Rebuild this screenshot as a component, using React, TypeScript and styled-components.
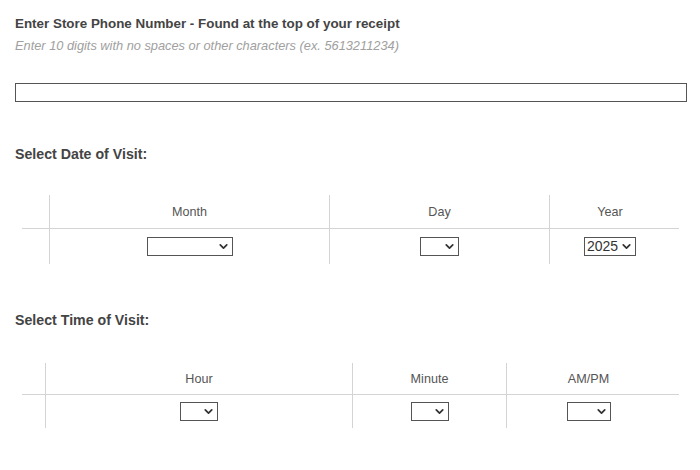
import React from "react";
import styled, { createGlobalStyle } from "styled-components";
import { ChevronDown } from "lucide-react";

const GlobalStyle = createGlobalStyle`
  body {
    margin: 0;
    background: #fff;
    font-family: "Liberation Sans", Arial, sans-serif;
  }
`;

type Column = { label: string; width: number; select?: number; value?: string };

const dateColumns: Column[] = [
  { label: "", width: 27 },
  { label: "Month", width: 280, select: 86 },
  { label: "Day", width: 220, select: 39 },
  { label: "Year", width: 121, select: 52, value: "2025" },
  { label: "", width: 9 },
];

const timeColumns: Column[] = [
  { label: "", width: 23 },
  { label: "Hour", width: 307, select: 38 },
  { label: "Minute", width: 154, select: 38 },
  { label: "AM/PM", width: 164, select: 44 },
  { label: "", width: 9 },
];

function PickerTable({ columns, rowHeight }: { columns: Column[]; rowHeight: number }) {
  const template = columns.map((c) => `${c.width}px`).join(" ");
  return (
    <Table>
      <Row $cols={template} $height={rowHeight} $header>
        {columns.map((c, i) => (
          <HeadCell key={i} $divider={i > 0 && i < columns.length - 1}>
            {c.label}
          </HeadCell>
        ))}
      </Row>
      <Row $cols={template} $height={rowHeight + 1}>
        {columns.map((c, i) => (
          <BodyCell key={i} $divider={i > 0 && i < columns.length - 1}>
            {c.select && (
              <SelectWrap $width={c.select}>
                <Select defaultValue={c.value || ""}>
                  <option value={c.value || ""}>{c.value || ""}</option>
                </Select>
                <Chevron>
                  <ChevronDown size={13} strokeWidth={3.2} />
                </Chevron>
              </SelectWrap>
            )}
          </BodyCell>
        ))}
      </Row>
    </Table>
  );
}

function App() {
  return (
    <>
      <GlobalStyle />
      <Wrapper>
        <Title>Enter Store Phone Number - Found at the top of your receipt</Title>
        <Hint>Enter 10 digits with no spaces or other characters (ex. 5613211234)</Hint>
        <PhoneInput type="text" />

        <SectionLabel $gap={44}>Select Date of Visit:</SectionLabel>
        <TableSpace $gap={32}>
          <PickerTable columns={dateColumns} rowHeight={34} />
        </TableSpace>

        <SectionLabel $gap={48}>Select Time of Visit:</SectionLabel>
        <TableSpace $gap={34}>
          <PickerTable columns={timeColumns} rowHeight={32} />
        </TableSpace>
      </Wrapper>
    </>
  );
}

export default App;

const Wrapper = styled.div`
  padding: 15px 13px 30px 15px;
  color: #444;
`;

const Title = styled.h2`
  margin: 0;
  font-size: 13.4px;
  line-height: 17px;
  font-weight: 700;
  color: #444;
`;

const Hint = styled.p`
  margin: 6px 0 0;
  font-size: 12.8px;
  line-height: 16px;
  font-style: italic;
  color: #a0a0a0;
`;

const PhoneInput = styled.input`
  display: block;
  box-sizing: border-box;
  margin-top: 29px;
  width: 672px;
  height: 19px;
  padding: 0 4px;
  border: 1px solid #555;
  border-radius: 0;
  outline: none;
  font-family: inherit;
  font-size: 12px;
`;

const SectionLabel = styled.h3<{ $gap: number }>`
  margin: ${(p) => p.$gap}px 0 0;
  font-size: 14.2px;
  line-height: 17px;
  font-weight: 700;
  color: #444;
`;

const TableSpace = styled.div<{ $gap: number }>`
  margin-top: ${(p) => p.$gap}px;
  padding-left: 7px;
`;

const Table = styled.div`
  width: 657px;
`;

const Row = styled.div<{ $cols: string; $height: number; $header?: boolean }>`
  display: grid;
  grid-template-columns: ${(p) => p.$cols};
  height: ${(p) => p.$height}px;
  border-bottom: ${(p) => (p.$header ? "1px solid #d4d4d4" : "none")};
  box-sizing: border-box;
`;

const HeadCell = styled.div<{ $divider: boolean }>`
  display: flex;
  align-items: center;
  justify-content: center;
  border-left: ${(p) => (p.$divider ? "1px solid #d4d4d4" : "none")};
  font-size: 12.6px;
  color: #555;
`;

const BodyCell = styled.div<{ $divider: boolean }>`
  display: flex;
  align-items: center;
  justify-content: center;
  border-left: ${(p) => (p.$divider ? "1px solid #d4d4d4" : "none")};
`;

const SelectWrap = styled.div<{ $width: number }>`
  position: relative;
  width: ${(p) => p.$width}px;
  height: 19px;
`;

const Select = styled.select`
  appearance: none;
  -webkit-appearance: none;
  box-sizing: border-box;
  width: 100%;
  height: 100%;
  margin: 0;
  padding: 0 0 0 2px;
  border: 1px solid #555;
  border-radius: 0;
  background: #fff;
  font-family: inherit;
  font-size: 14px;
  line-height: 17px;
  color: #333;
  outline: none;
`;

const Chevron = styled.span`
  position: absolute;
  right: 3px;
  top: 3px;
  display: flex;
  color: #333;
  pointer-events: none;
`;
